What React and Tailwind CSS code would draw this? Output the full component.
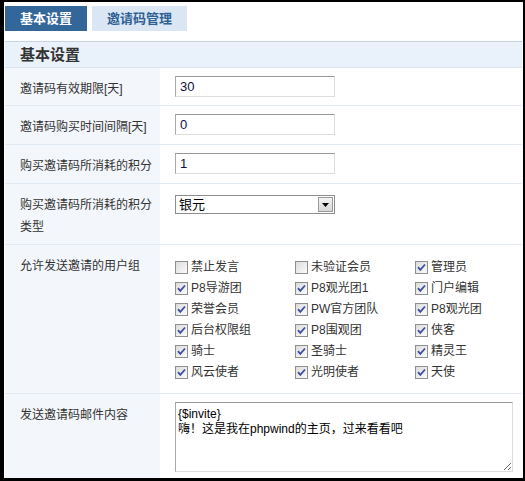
import React from 'react';

const font = { fontFamily: '"Liberation Sans", "Noto Sans CJK SC", sans-serif' };

const groups = [
  ['禁止发言', false], ['未验证会员', false], ['管理员', true],
  ['P8导游团', true], ['P8观光团1', true], ['门户编辑', true],
  ['荣誉会员', true], ['PW官方团队', true], ['P8观光团', true],
  ['后台权限组', true], ['P8围观团', true], ['侠客', true],
  ['骑士', true], ['圣骑士', true], ['精灵王', true],
  ['风云使者', true], ['光明使者', true], ['天使', true],
];

const Check = ({ on }) => (
  <span className="w-[13px] h-[13px] border border-[#8e8f8f] bg-gradient-to-br from-[#dcdcdc] to-[#fbfbfb] flex items-center justify-center shrink-0">
    {on && (
      <svg viewBox="0 0 9 9" className="w-[9px] h-[9px]">
        <path d="M1 4.2 L3.3 6.8 L8 1.5" stroke="#3d4fa0" strokeWidth="1.8" fill="none" />
      </svg>
    )}
  </span>
);

const Row = ({ label, children, className = '' }) => (
  <div className={`flex border-b border-[#e2ebf4] ${className}`}>
    <div className="w-[155px] shrink-0 bg-[#f3f7fc] pl-[15px] pr-2 pt-[10px] text-[12px] leading-[22px] text-[#333]">
      {label}
    </div>
    <div className="flex-1 pl-[15px] pt-2 pb-[9px]">{children}</div>
  </div>
);

const TextInput = ({ value }) => (
  <div className="w-[160px] h-[21px] border border-t-[#999] border-l-[#aaa] border-r-[#ddd] border-b-[#ddd] bg-white px-[4px] text-[13px] leading-[19px] text-[#101040]">
    {value}
  </div>
);

export default function App() {
  return (
    <div style={font} className="w-[525px] h-[481px] bg-white border-l-4 border-t-2 border-r-2 border-b-[3px] border-black overflow-hidden">
      <div className="pl-px pr-px">
        <div className="flex gap-[5px] pt-1 h-[39px]">
          <div className="w-[82px] h-[25px] bg-[#336699] text-white font-bold text-[13px] flex items-center justify-center">
            基本设置
          </div>
          <div className="w-[95px] h-[25px] bg-[#dae6f4] text-[#2f5f93] font-bold text-[13px] flex items-center justify-center">
            邀请码管理
          </div>
        </div>

        <div className="h-[27px] bg-[#e9f1fa] border-t border-[#c8d6e3] border-b border-b-[#dbe6f2] pl-[15px] text-[15px] font-bold text-[#333] leading-[25px]">
          基本设置
        </div>

        <Row label="邀请码有效期限[天]" className="h-[38px]">
          <TextInput value="30" />
        </Row>
        <Row label="邀请码购买时间间隔[天]" className="h-[39px]">
          <TextInput value="0" />
        </Row>
        <Row label="购买邀请码所消耗的积分" className="h-[39px]">
          <TextInput value="1" />
        </Row>
        <Row label={<>购买邀请码所消耗的积分<br />类型</>} className="h-[61px]">
          <div className="w-[160px] h-[19px] mt-[3px] border border-[#8e8e8e] bg-white flex items-center">
            <span className="flex-1 pl-[3px] text-[13px] leading-[17px] text-black">银元</span>
            <span className="w-[15px] h-[15px] mr-px border border-[#9a9a9a] bg-gradient-to-b from-[#f4f4f4] to-[#d8d8d8] flex items-center justify-center">
              <svg viewBox="0 0 7 4" className="w-[7px] h-[4px]">
                <path d="M0 0 H7 L3.5 4 Z" fill="#000" />
              </svg>
            </span>
          </div>
        </Row>
        <Row label="允许发送邀请的用户组" className="h-[149px]">
          <div className="grid grid-cols-[120px_120px_100px] auto-rows-[13px] gap-y-[8px] pt-[8px] text-[12px] text-[#333]">
            {groups.map(([name, on]) => (
              <label key={name} className="flex items-center gap-[3px] h-[13px]">
                <Check on={on} />
                <span className="leading-[13px]">{name}</span>
              </label>
            ))}
          </div>
        </Row>
        <Row label="发送邀请码邮件内容" className="h-[84px] border-b-0">
          <textarea
            readOnly
            style={font}
            className="w-[338px] h-[70px] border border-t-[#999] border-l-[#aaa] border-r-[#ddd] border-b-[#ddd] px-[2px] pt-[4px] text-[12px] leading-[15px] text-black outline-none resize"
            defaultValue={'{$invite}\n嗨！这是我在phpwind的主页，过来看看吧'}
          />
        </Row>
      </div>
    </div>
  );
}
